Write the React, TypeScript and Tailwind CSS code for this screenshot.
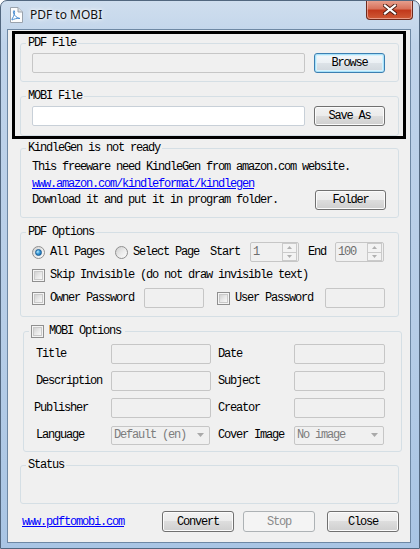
import React from "react";

const mono =
  "[font-family:'Liberation_Mono',monospace] text-[12px] leading-[14px] tracking-[-1.2px] text-black";

const btnBase =
  "flex items-center justify-center rounded-[3px] border shrink-0 " + mono;
const btnNormal =
  "border-[#707070] bg-[linear-gradient(#f2f2f2_0%,#ebebeb_50%,#dddddd_50%,#cfcfcf_100%)] shadow-[inset_0_0_0_1px_#fbfbfb]";
const btnFocus =
  "border-[#3c7fb1] bg-[linear-gradient(#f4f8fb_0%,#ebf0f4_50%,#dde3e8_50%,#d0d7dd_100%)] shadow-[inset_0_0_0_1px_#a8e2fa,inset_0_0_0_2px_#d8f1fc]";
const btnDisabled = "border-[#adb2b5] bg-[#f4f4f4] text-[#838383]";

function Button({
  children,
  w,
  h,
  variant = "normal",
}: {
  children: React.ReactNode;
  w: string;
  h: string;
  variant?: "normal" | "focus" | "disabled";
}) {
  const v =
    variant === "focus" ? btnFocus : variant === "disabled" ? btnDisabled : btnNormal;
  return (
    <div className={`${btnBase} ${v} ${w} ${h}`}>
      <span className={variant === "disabled" ? "text-[#8a8a8a]" : ""}>{children}</span>
    </div>
  );
}

function Checkbox() {
  return (
    <span className="flex h-[13px] w-[13px] shrink-0 border border-[#8f8f8f] bg-[#f4f4f4] p-[1px]">
      <span className="flex-1 border border-[#c9c9c9] bg-[linear-gradient(135deg,#d2d2d2_0%,#e9e9e9_55%,#f8f8f8_100%)]" />
    </span>
  );
}

function Radio({ checked }: { checked?: boolean }) {
  return (
    <span className="flex h-[13px] w-[13px] shrink-0 items-center justify-center rounded-full border border-[#8f8f8f] bg-[linear-gradient(135deg,#cfcfcf_0%,#ececec_55%,#fbfbfb_100%)]">
      {checked && (
        <span className="h-[7px] w-[7px] rounded-full border border-[#1a5c94] bg-[radial-gradient(circle_at_35%_35%,#b9ecff_0%,#3a9ad8_45%,#0f5fa3_100%)]" />
      )}
    </span>
  );
}

function Spin({ value }: { value: string }) {
  return (
    <div className="flex h-[20px] w-[49px] shrink-0 items-center rounded-[2px] border border-[#c6c6c6] bg-[#f0f0f0]">
      <span className="flex-1 pl-[2px] text-[#6d6d6d]">{value}</span>
      <div className="mr-[1px] flex h-[18px] w-[15px] flex-col">
        <div className="flex flex-1 items-center justify-center border border-[#cacaca] bg-[#f3f3f3]">
          <svg width="5" height="3" viewBox="0 0 5 3">
            <path d="M0 3 L2.5 0 L5 3 Z" fill="#b0b0b0" />
          </svg>
        </div>
        <div className="flex flex-1 items-center justify-center border border-t-0 border-[#cacaca] bg-[#f3f3f3]">
          <svg width="5" height="3" viewBox="0 0 5 3">
            <path d="M0 0 L2.5 3 L5 0 Z" fill="#b0b0b0" />
          </svg>
        </div>
      </div>
    </div>
  );
}

function TextBox({ w, white }: { w: string; white?: boolean }) {
  return (
    <div
      className={`h-[20px] ${w} shrink-0 rounded-[2px] border ${
        white ? "border-[#c8d0d8] bg-white" : "border-[#c6c6c6] bg-[#f0f0f0]"
      }`}
    />
  );
}

function Combo({ w, text }: { w: string; text: string }) {
  return (
    <div
      className={`flex h-[19px] ${w} shrink-0 items-center rounded-[2px] border border-[#c6c6c6] bg-[#f0f0f0] pl-[2px]`}
    >
      <span className="flex-1 text-[#7d7d7d]">{text}</span>
      <svg width="7" height="4" viewBox="0 0 7 4" className="mr-[5px]">
        <path d="M0 0 L3.5 4 L7 0 Z" fill="#a9a9a9" />
      </svg>
    </div>
  );
}

function Group({
  legend,
  className,
  children,
}: {
  legend: React.ReactNode;
  className?: string;
  children?: React.ReactNode;
}) {
  return (
    <fieldset
      className={`w-[379px] shrink-0 rounded-[3px] border border-[#d5dfe5] ${className ?? ""}`}
    >
      <legend className="ml-[5px] px-[2px] leading-[14px]">{legend}</legend>
      {children}
    </fieldset>
  );
}

function AppIcon() {
  return (
    <svg width="16" height="16" viewBox="0 0 16 16">
      <path d="M2.5 0.5 H10 L14.5 5 V15.5 H2.5 Z" fill="#fdfdfd" stroke="#9aa3ad" />
      <path d="M10 0.5 V5 H14.5" fill="#d9dde2" stroke="#9aa3ad" />
      <path
        d="M4 12 C6 9 7 6 6.5 4 C6 3 5 4 5.5 6 C6.5 9 9 11 12 11.5 C9 11 6 12 4 13 Z"
        fill="none"
        stroke="#4d8fd1"
        strokeWidth="1"
      />
    </svg>
  );
}

function CloseGlyph() {
  return (
    <svg width="14" height="11" viewBox="0 0 14 11">
      <path d="M2 1.5 L12 9.5 M12 1.5 L2 9.5" stroke="#4a1d14" strokeWidth="4" strokeLinecap="square" />
      <path d="M2 1.5 L12 9.5 M12 1.5 L2 9.5" stroke="#ffffff" strokeWidth="2.2" strokeLinecap="square" />
    </svg>
  );
}

export default function App() {
  return (
    <div className="h-[549px] w-[420px] overflow-hidden bg-white">
      <div className="flex h-[549px] w-[420px] flex-col overflow-hidden rounded-t-[7px] border border-[#52677f] bg-[linear-gradient(180deg,#cfdeee_0%,#bfd3ea_8%,#b6cde7_60%,#a9c5e4_100%)]">
        {/* Title bar */}
        <div className="flex h-[28px] shrink-0 items-start">
          <div className="ml-[7px] mt-[6px] flex items-center gap-[6px]">
            <AppIcon />
            <span className="[font-family:'Noto_Sans',sans-serif] text-[12px] leading-[16px] text-[#111] [text-shadow:0_0_6px_#ffffff,0_0_3px_#ffffff]">
              PDF to MOBI
            </span>
          </div>
          <div className="-mt-[1px] ml-auto mr-[6px] flex h-[20px] w-[47px] items-center justify-center rounded-b-[4px] border border-t-0 border-[#6e2a1d] bg-[linear-gradient(180deg,#e8a493_0%,#d8735c_45%,#c2391c_55%,#cf5a36_100%)] shadow-[inset_0_0_0_1px_rgba(255,210,200,0.55)]">
            <CloseGlyph />
          </div>
        </div>

        {/* Body */}
        <div className="flex flex-1 items-start">
          <div className="w-[6px] shrink-0" />
          <div
            className={`flex h-[514px] w-[404px] shrink-0 flex-col border border-[#6e88a4] bg-[#f0f0f0] pt-[1px] ${mono}`}
          >
            {/* Highlighted file group */}
            <div className="ml-[4px] flex w-[394px] flex-col border-[3px] border-black pl-[5px] pt-[2px]">
              <Group legend="PDF File">
                <div className="flex items-center gap-[9px] pb-[8px] pl-[11px] pt-[3px]">
                  <TextBox w="w-[273px]" />
                  <Button w="w-[71px]" h="h-[20px]" variant="focus">
                    Browse
                  </Button>
                </div>
              </Group>
              <Group legend="MOBI File" className="mt-[7px]">
                <div className="flex items-center gap-[9px] pb-[9px] pl-[11px] pt-[3px]">
                  <TextBox w="w-[273px]" white />
                  <Button w="w-[71px]" h="h-[20px]">
                    Save As
                  </Button>
                </div>
              </Group>
            </div>

            {/* KindleGen */}
            <Group legend="KindleGen is not ready" className="ml-[12px] mt-[2px]">
              <div className="flex flex-col pb-[7px] pl-[11px] pr-[12px]">
                <div className="mt-[5px]">This freeware need KindleGen from amazon.com website.</div>
                <div className="mt-[4px] leading-[12px] text-[#0000ff] underline">
                  www.amazon.com/kindleformat/kindlegen
                </div>
                <div className="flex h-[20px] items-center justify-between">
                  <span>Download it and put it in program folder.</span>
                  <Button w="w-[71px]" h="h-[20px]">
                    Folder
                  </Button>
                </div>
              </div>
            </Group>

            {/* PDF Options */}
            <Group legend="PDF Options" className="ml-[12px] mt-[7px]">
              <div className="flex flex-col pb-[8px] pl-[11px]">
                <div className="mt-[3px] flex h-[20px] items-center">
                  <Radio checked />
                  <span className="ml-[5px]">All Pages</span>
                  <span className="ml-[11px]">
                    <Radio />
                  </span>
                  <span className="ml-[5px]">Select Page</span>
                  <span className="ml-[11px]">Start</span>
                  <span className="ml-[10px]">
                    <Spin value="1" />
                  </span>
                  <span className="ml-[9px]">End</span>
                  <span className="ml-[9px]">
                    <Spin value="100" />
                  </span>
                </div>
                <div className="mt-[6px] flex h-[14px] items-center">
                  <Checkbox />
                  <span className="ml-[5px]">Skip Invisible (do not draw invisible text)</span>
                </div>
                <div className="mt-[6px] flex h-[20px] items-center">
                  <Checkbox />
                  <span className="ml-[5px]">Owner Password</span>
                  <span className="ml-[10px]">
                    <TextBox w="w-[60px]" />
                  </span>
                  <span className="ml-[13px]">
                    <Checkbox />
                  </span>
                  <span className="ml-[5px]">User Password</span>
                  <span className="ml-[12px]">
                    <TextBox w="w-[60px]" />
                  </span>
                </div>
              </div>
            </Group>

            {/* MOBI Options */}
            <Group
              className="ml-[15px] mt-[7px]"
              legend={
                <span className="flex items-center gap-[5px] pr-[2px]">
                  <Checkbox />
                  <span>MOBI Options</span>
                </span>
              }
            >
              <div className="flex flex-col gap-[7px] pb-[6px] pl-[12px] pt-[6px]">
                {[
                  ["Title", "Date"],
                  ["Description", "Subject"],
                  ["Publisher", "Creator"],
                ].map(([l, r]) => (
                  <div key={l} className="flex h-[20px] items-center">
                    <span className={`w-[75px] shrink-0 ${l === "Publisher" ? "-ml-[2px]" : ""}`}>
                      {l}
                    </span>
                    <span className={l === "Publisher" ? "ml-[2px]" : ""}>
                      <TextBox w="w-[100px]" />
                    </span>
                    <span className="ml-[7px] w-[76px] shrink-0">{r}</span>
                    <TextBox w="w-[91px]" />
                  </div>
                ))}
                <div className="flex h-[20px] items-center">
                  <span className="w-[75px] shrink-0">Language</span>
                  <Combo w="w-[99px]" text="Default (en)" />
                  <span className="ml-[8px] w-[76px] shrink-0">Cover Image</span>
                  <Combo w="w-[90px]" text="No image" />
                </div>
              </div>
            </Group>

            {/* Status */}
            <Group legend="Status" className="ml-[12px] mt-[6px]">
              <div className="h-[31px]" />
            </Group>

            {/* Bottom row */}
            <div className="mt-[7px] flex h-[21px] items-center pl-[14px] pr-[11px]">
              <span className="text-[#0000ff] underline">www.pdftomobi.com</span>
              <div className="ml-auto flex items-center">
                <Button w="w-[72px]" h="h-[21px]">
                  Convert
                </Button>
                <span className="ml-[9px]">
                  <Button w="w-[72px]" h="h-[21px]" variant="disabled">
                    Stop
                  </Button>
                </span>
                <span className="ml-[12px]">
                  <Button w="w-[72px]" h="h-[21px]">
                    Close
                  </Button>
                </span>
              </div>
            </div>
          </div>
        </div>
      </div>
    </div>
  );
}
